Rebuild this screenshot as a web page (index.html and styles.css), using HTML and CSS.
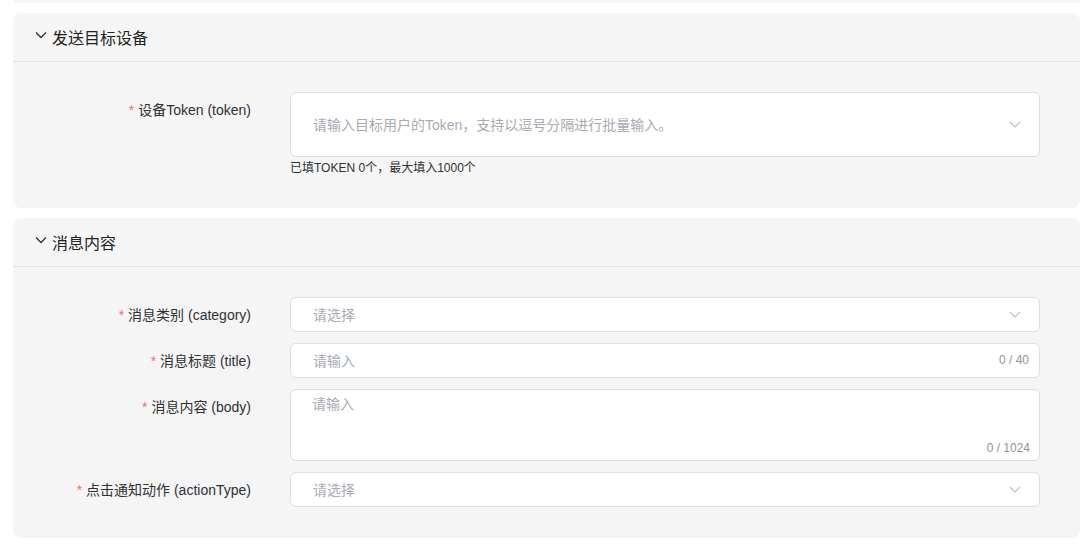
FILE: index.html
```html
<!DOCTYPE html>
<html lang="zh-CN">
<head>
  <meta charset="UTF-8"/>
  <meta name="viewport" content="width=device-width,initial-scale=1"/>
  <title>推送消息</title>
  <link rel="stylesheet" href="styles.css">
</head>
<body>
  <div class="page">
    <div class="card card-stub"></div>

    <section class="card">
      <div class="card-head">
        <svg class="fold" viewBox="0 0 12 8" width="12" height="8"><path d="M1 1.5 L6 6.5 L11 1.5" fill="none" stroke="#333" stroke-width="1.3"/></svg>
        <span>发送目标设备</span>
      </div>
      <div class="card-body">
        <div class="row">
          <label class="label"><i>*</i> 设备Token (token)</label>
          <div class="field">
            <div class="input select tall">
              <span class="ph">请输入目标用户的Token，支持以逗号分隔进行批量输入。</span>
              <svg class="arrow" viewBox="0 0 12 7" width="12" height="7"><path d="M1 1 L6 6 L11 1" fill="none" stroke="#b8bcc4" stroke-width="1.1"/></svg>
            </div>
            <p class="hint">已填TOKEN 0个，最大填入1000个</p>
          </div>
        </div>
      </div>
    </section>

    <section class="card">
      <div class="card-head">
        <svg class="fold" viewBox="0 0 12 8" width="12" height="8"><path d="M1 1.5 L6 6.5 L11 1.5" fill="none" stroke="#333" stroke-width="1.3"/></svg>
        <span>消息内容</span>
      </div>
      <div class="card-body">
        <div class="row">
          <label class="label"><i>*</i> 消息类别 (category)</label>
          <div class="field">
            <div class="input select">
              <span class="ph">请选择</span>
              <svg class="arrow" viewBox="0 0 12 7" width="12" height="7"><path d="M1 1 L6 6 L11 1" fill="none" stroke="#b8bcc4" stroke-width="1.1"/></svg>
            </div>
          </div>
        </div>
        <div class="row">
          <label class="label"><i>*</i> 消息标题 (title)</label>
          <div class="field">
            <div class="input select">
              <span class="ph">请输入</span>
              <span class="count">0 / 40</span>
            </div>
          </div>
        </div>
        <div class="row">
          <label class="label"><i>*</i> 消息内容 (body)</label>
          <div class="field">
            <div class="input area">
              <span class="ph">请输入</span>
              <span class="count">0 / 1024</span>
            </div>
          </div>
        </div>
        <div class="row">
          <label class="label"><i>*</i> 点击通知动作 (actionType)</label>
          <div class="field">
            <div class="input select">
              <span class="ph">请选择</span>
              <svg class="arrow" viewBox="0 0 12 7" width="12" height="7"><path d="M1 1 L6 6 L11 1" fill="none" stroke="#b8bcc4" stroke-width="1.1"/></svg>
            </div>
          </div>
        </div>
      </div>
    </section>
  </div>
</body>
</html>
```

FILE: styles.css
```css
html, body {
  margin:0; padding:0; background:#fff;
  font-family:"Liberation Sans", "Noto Sans CJK SC", sans-serif;
  color:#303133;
}
.page {
  display:flex; flex-direction:column; gap:10px;
  padding:0 9px 0 13px;
}

.card { background:#f5f5f5; border-radius:8px; }
.card-stub { height:3px; border-radius:0 0 6px 6px; }

.card-head {
  height:48px; display:flex; align-items:center; gap:5px;
  padding-left:22px; border-bottom:1px solid #e4e4e4;
  font-size:16px; color:#222;
}
.fold { margin-bottom:4px; }
.card-head span { margin-bottom:1px; }

.card-body {
  padding:30px 40px 31px 0;
  display:flex; flex-direction:column; gap:11px;
}
.row { display:grid; grid-template-columns:238px 1fr; column-gap:39px; }
.label {
  text-align:right; font-size:14px; line-height:20px;
  padding-top:8px; color:#303133;
}
.label i { font-style:normal; color:#f56c6c; }

.input {
  position:relative; background:#fff;
  border:1px solid #dcdfe6; border-radius:6px;
  box-sizing:border-box; font-size:14px;
}
.select {
  height:35px; display:flex; align-items:center;
  padding:0 18px 1px 22px;
}
.select.tall { height:65px; }
.area { height:72px; padding:3px 23px 0 21px; }
.ph { color:#a8abb2; flex:1; }
.arrow { flex:none; }
.count {
  font-size:12px; color:#909399;
  position:absolute; right:9px; bottom:5px;
}
.select .count { position:static; margin-right:-8px; }

.hint {
  margin:2px 0 0; font-size:12px; line-height:18px; color:#303133;
}
```
